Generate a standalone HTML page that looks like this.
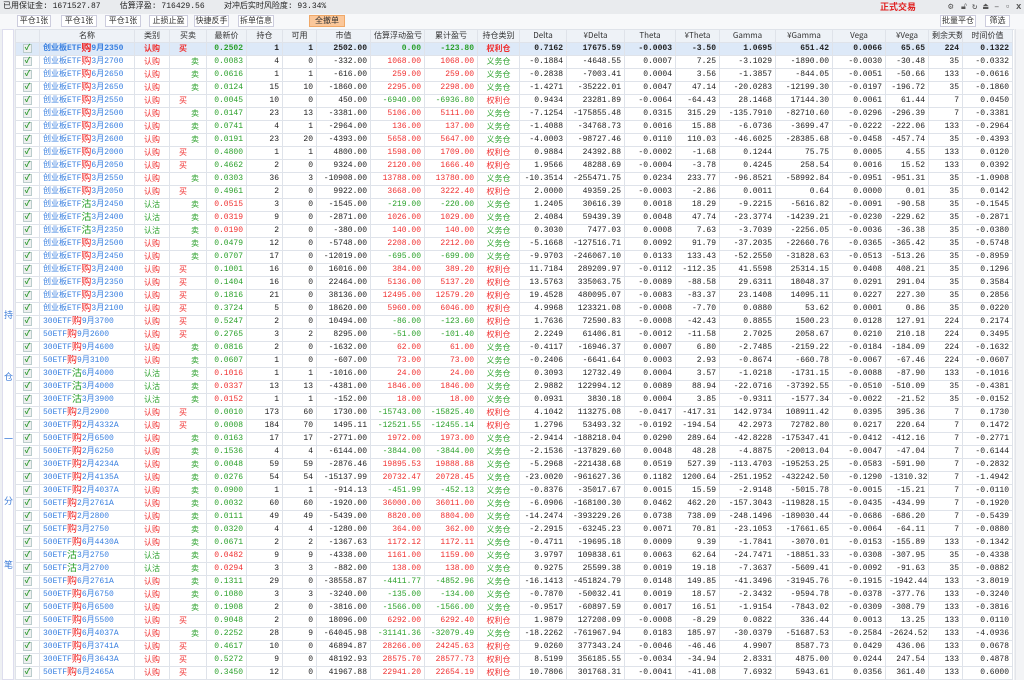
<!DOCTYPE html>
<html><head><meta charset="utf-8"><style>
*{margin:0;padding:0;box-sizing:border-box}
body{width:1024px;height:680px;overflow:hidden;background:#eef0f3;font-family:"Liberation Mono","Noto Sans CJK SC",monospace;font-size:8px;color:#222;position:relative}
.top{position:absolute;left:0;top:0;width:1024px;height:14px;background:#e9ebee;font-size:8px;line-height:13px;padding-left:3px;white-space:pre;font-family:"Liberation Mono","Noto Sans CJK SC",monospace}
.live{position:absolute;left:880px;top:0;color:#e02020;font:bold 9px/14px "Noto Sans CJK SC",sans-serif}
.ic{position:absolute;top:2px;font-size:9px;line-height:10px;color:#555}
.bar{position:absolute;left:0;top:14px;width:1024px;height:15px;background:#f7f8fa}
.btn{position:absolute;top:1px;height:12px;border:1px solid #ccd;background:#fff;font:8px/10px "Noto Sans CJK SC",sans-serif;text-align:center;color:#333}
.btn.o{background:#fbc79a;border-color:#f0a868}
.side{position:absolute;left:2px;top:29px;width:12px;height:651px;background:#fff;border:1px solid #dde}
.side span{position:absolute;left:1px;color:#3a7ad8;font:9px/10px "Noto Sans CJK SC",sans-serif}
.sb{position:absolute;left:1015px;top:29px;width:9px;height:651px;background:#f3f4f6;border-left:1px solid #e3e5ea}
table{position:absolute;left:15px;top:29px;width:999px;display:block;background:#fff;border-left:1px solid #dfe3ea;border-top:1px solid #dfe3ea}
tbody{display:block}
tr{display:flex;height:13px}
td,th{flex:none;display:block;border-right:1px solid #dfe3ea;border-bottom:1px solid #dfe3ea;height:13px;padding:0 3px;text-align:right;white-space:nowrap;overflow:hidden;line-height:12px;font-size:8px}
th{background:#eef2f7;font-weight:normal;text-align:center;font-family:"Noto Sans CJK SC",sans-serif;color:#333}
tr>*:nth-child(1){width:24px}tr>*:nth-child(2){width:95px}tr>*:nth-child(3){width:35px}tr>*:nth-child(4){width:37px}tr>*:nth-child(5){width:40px}tr>*:nth-child(6){width:36px}tr>*:nth-child(7){width:34px}tr>*:nth-child(8){width:54px}tr>*:nth-child(9){width:54px}tr>*:nth-child(10){width:53px}tr>*:nth-child(11){width:42px}tr>*:nth-child(12){width:47px}tr>*:nth-child(13){width:58px}tr>*:nth-child(14){width:51px}tr>*:nth-child(15){width:44px}tr>*:nth-child(16){width:56px}tr>*:nth-child(17){width:57px}tr>*:nth-child(18){width:53px}tr>*:nth-child(19){width:43px}tr>*:nth-child(20){width:34px}tr>*:nth-child(21){width:50px}
td:nth-child(2){display:flex;align-items:center;justify-content:flex-start;color:#3a80e0;font-family:"Liberation Mono","Noto Sans CJK SC",monospace}
td:nth-child(2) em{position:relative;top:-2px;font-style:normal;color:#f02020;font-size:10px;line-height:12px;font-family:"Noto Sans CJK SC",sans-serif}
td:nth-child(2) em.g{color:#2aa02a}
td:nth-child(3),td:nth-child(11){text-align:center;font-family:"Noto Sans CJK SC",sans-serif}
td:nth-child(4){font-family:"Noto Sans CJK SC",sans-serif}
td.b{text-align:left;padding-left:9px}
td.s{text-align:right;padding-right:7px}
.r{color:#f03030}.g{color:#2aa02a}
td:first-child{padding:1px 0 0 0;text-align:center;line-height:9px}
.cb{display:inline-block;width:9px;height:9px;border:1px solid #bcc;background:#eef0f0;color:#2a9a2a;font-size:8px;line-height:7px;font-weight:bold;font-style:normal;vertical-align:top}
tr.sel td{background:#dde9f8;font-weight:bold}
</style></head><body>
<div class="top">已用保证金: 1671527.87    估算浮盈: 716429.56    对冲后实时风险度: 93.34%</div>
<div class="live">正式交易</div>
<div class="ic" style="left:948px">⚙</div><div class="ic" style="left:961px">🔓︎</div><div class="ic" style="left:972px">↻</div><div class="ic" style="left:983px">⏏</div><div class="ic" style="left:994px">–</div><div class="ic" style="left:1005px">▫</div><div class="ic" style="left:1016px;font-weight:bold">x</div>
<div class="bar">
<div class="btn" style="left:17px;width:34px">平仓1张</div>
<div class="btn" style="left:61px;width:36px">平仓1张</div>
<div class="btn" style="left:105px;width:36px">平仓1张</div>
<div class="btn" style="left:149px;width:39px">止损止盈</div>
<div class="btn" style="left:194px;width:35px">快捷反手</div>
<div class="btn" style="left:238px;width:36px">拆单信息</div>
<div class="btn o" style="left:309px;width:36px">全撤单</div>
<div class="btn" style="left:940px;width:36px">批量平仓</div>
<div class="btn" style="left:985px;width:25px">筛选</div>
</div>
<div class="side"><span style="top:280px">持</span><span style="top:342px">仓</span><span style="top:404px">一</span><span style="top:466px">分</span><span style="top:530px">笔</span></div>
<table>
<tr><th></th><th>名称</th><th>类别</th><th>买卖</th><th>最新价</th><th>持仓</th><th>可用</th><th>市值</th><th>估算浮动盈亏</th><th>累计盈亏</th><th>持仓类别</th><th>Delta</th><th>¥Delta</th><th>Theta</th><th>¥Theta</th><th>Gamma</th><th>¥Gamma</th><th>Vega</th><th>¥Vega</th><th>剩余天数</th><th>时间价值</th></tr>
<tr class="sel"><td><i class="cb">✓</i></td><td>创业板ETF<em>购</em>9月2350</td><td class=r>认购</td><td class="r b">买</td><td class=g>0.2502</td><td>1</td><td>1</td><td>2502.00</td><td class=g>0.00</td><td class=g>-123.80</td><td class=r>权利仓</td><td>0.7162</td><td>17675.59</td><td>-0.0003</td><td>-3.50</td><td>1.0695</td><td>651.42</td><td>0.0066</td><td>65.65</td><td>224</td><td>0.1322</td></tr>
<tr><td><i class="cb">✓</i></td><td>创业板ETF<em>购</em>3月2700</td><td class=r>认购</td><td class="g s">卖</td><td class=g>0.0083</td><td>4</td><td>0</td><td>-332.00</td><td class=r>1068.00</td><td class=r>1068.00</td><td class=g>义务仓</td><td>-0.1884</td><td>-4648.55</td><td>0.0007</td><td>7.25</td><td>-3.1029</td><td>-1890.00</td><td>-0.0030</td><td>-30.48</td><td>35</td><td>-0.0332</td></tr>
<tr><td><i class="cb">✓</i></td><td>创业板ETF<em>购</em>6月2650</td><td class=r>认购</td><td class="g s">卖</td><td class=g>0.0616</td><td>1</td><td>1</td><td>-616.00</td><td class=r>259.00</td><td class=r>259.00</td><td class=g>义务仓</td><td>-0.2838</td><td>-7003.41</td><td>0.0004</td><td>3.56</td><td>-1.3857</td><td>-844.05</td><td>-0.0051</td><td>-50.66</td><td>133</td><td>-0.0616</td></tr>
<tr><td><i class="cb">✓</i></td><td>创业板ETF<em>购</em>3月2650</td><td class=r>认购</td><td class="g s">卖</td><td class=g>0.0124</td><td>15</td><td>10</td><td>-1860.00</td><td class=r>2295.00</td><td class=r>2298.00</td><td class=g>义务仓</td><td>-1.4271</td><td>-35222.01</td><td>0.0047</td><td>47.14</td><td>-20.0283</td><td>-12199.30</td><td>-0.0197</td><td>-196.72</td><td>35</td><td>-0.1860</td></tr>
<tr><td><i class="cb">✓</i></td><td>创业板ETF<em>购</em>3月2550</td><td class=r>认购</td><td class="r b">买</td><td class=g>0.0045</td><td>10</td><td>0</td><td>450.00</td><td class=g>-6940.00</td><td class=g>-6936.80</td><td class=r>权利仓</td><td>0.9434</td><td>23281.89</td><td>-0.0064</td><td>-64.43</td><td>28.1468</td><td>17144.30</td><td>0.0061</td><td>61.44</td><td>7</td><td>0.0450</td></tr>
<tr><td><i class="cb">✓</i></td><td>创业板ETF<em>购</em>3月2500</td><td class=r>认购</td><td class="g s">卖</td><td class=g>0.0147</td><td>23</td><td>13</td><td>-3381.00</td><td class=r>5106.00</td><td class=r>5111.00</td><td class=g>义务仓</td><td>-7.1254</td><td>-175855.48</td><td>0.0315</td><td>315.29</td><td>-135.7910</td><td>-82710.60</td><td>-0.0296</td><td>-296.39</td><td>7</td><td>-0.3381</td></tr>
<tr><td><i class="cb">✓</i></td><td>创业板ETF<em>购</em>3月2600</td><td class=r>认购</td><td class="g s">卖</td><td class=g>0.0741</td><td>4</td><td>1</td><td>-2964.00</td><td class=r>136.00</td><td class=r>137.00</td><td class=g>义务仓</td><td>-1.4088</td><td>-34768.73</td><td>0.0016</td><td>15.88</td><td>-6.0736</td><td>-3699.47</td><td>-0.0222</td><td>-222.06</td><td>133</td><td>-0.2964</td></tr>
<tr><td><i class="cb">✓</i></td><td>创业板ETF<em>购</em>3月2600</td><td class=r>认购</td><td class="g s">卖</td><td class=g>0.0191</td><td>23</td><td>20</td><td>-4393.00</td><td class=r>5658.00</td><td class=r>5647.00</td><td class=g>义务仓</td><td>-4.0003</td><td>-98727.46</td><td>0.0110</td><td>110.03</td><td>-46.6025</td><td>-28385.68</td><td>-0.0458</td><td>-457.74</td><td>35</td><td>-0.4393</td></tr>
<tr><td><i class="cb">✓</i></td><td>创业板ETF<em>购</em>6月2000</td><td class=r>认购</td><td class="r b">买</td><td class=g>0.4800</td><td>1</td><td>1</td><td>4800.00</td><td class=r>1598.00</td><td class=r>1709.00</td><td class=r>权利仓</td><td>0.9884</td><td>24392.88</td><td>-0.0002</td><td>-1.68</td><td>0.1244</td><td>75.75</td><td>0.0005</td><td>4.55</td><td>133</td><td>0.0120</td></tr>
<tr><td><i class="cb">✓</i></td><td>创业板ETF<em>购</em>6月2050</td><td class=r>认购</td><td class="r b">买</td><td class=g>0.4662</td><td>2</td><td>0</td><td>9324.00</td><td class=r>2120.00</td><td class=r>1666.40</td><td class=r>权利仓</td><td>1.9566</td><td>48288.69</td><td>-0.0004</td><td>-3.78</td><td>0.4245</td><td>258.54</td><td>0.0016</td><td>15.52</td><td>133</td><td>0.0392</td></tr>
<tr><td><i class="cb">✓</i></td><td>创业板ETF<em>购</em>3月2550</td><td class=r>认购</td><td class="g s">卖</td><td class=g>0.0303</td><td>36</td><td>3</td><td>-10908.00</td><td class=r>13788.00</td><td class=r>13780.00</td><td class=g>义务仓</td><td>-10.3514</td><td>-255471.75</td><td>0.0234</td><td>233.77</td><td>-96.8521</td><td>-58992.84</td><td>-0.0951</td><td>-951.31</td><td>35</td><td>-1.0908</td></tr>
<tr><td><i class="cb">✓</i></td><td>创业板ETF<em>购</em>3月2050</td><td class=r>认购</td><td class="r b">买</td><td class=g>0.4961</td><td>2</td><td>0</td><td>9922.00</td><td class=r>3668.00</td><td class=r>3222.40</td><td class=r>权利仓</td><td>2.0000</td><td>49359.25</td><td>-0.0003</td><td>-2.86</td><td>0.0011</td><td>0.64</td><td>0.0000</td><td>0.01</td><td>35</td><td>0.0142</td></tr>
<tr><td><i class="cb">✓</i></td><td>创业板ETF<em class=g>沽</em>3月2450</td><td class=g>认沽</td><td class="g s">卖</td><td class=r>0.0515</td><td>3</td><td>0</td><td>-1545.00</td><td class=g>-219.00</td><td class=g>-220.00</td><td class=g>义务仓</td><td>1.2405</td><td>30616.39</td><td>0.0018</td><td>18.29</td><td>-9.2215</td><td>-5616.82</td><td>-0.0091</td><td>-90.58</td><td>35</td><td>-0.1545</td></tr>
<tr><td><i class="cb">✓</i></td><td>创业板ETF<em class=g>沽</em>3月2400</td><td class=g>认沽</td><td class="g s">卖</td><td class=r>0.0319</td><td>9</td><td>0</td><td>-2871.00</td><td class=r>1026.00</td><td class=r>1029.00</td><td class=g>义务仓</td><td>2.4084</td><td>59439.39</td><td>0.0048</td><td>47.74</td><td>-23.3774</td><td>-14239.21</td><td>-0.0230</td><td>-229.62</td><td>35</td><td>-0.2871</td></tr>
<tr><td><i class="cb">✓</i></td><td>创业板ETF<em class=g>沽</em>3月2350</td><td class=g>认沽</td><td class="g s">卖</td><td class=r>0.0190</td><td>2</td><td>0</td><td>-380.00</td><td class=r>140.00</td><td class=r>140.00</td><td class=g>义务仓</td><td>0.3030</td><td>7477.03</td><td>0.0008</td><td>7.63</td><td>-3.7039</td><td>-2256.05</td><td>-0.0036</td><td>-36.38</td><td>35</td><td>-0.0380</td></tr>
<tr><td><i class="cb">✓</i></td><td>创业板ETF<em>购</em>3月2500</td><td class=r>认购</td><td class="g s">卖</td><td class=g>0.0479</td><td>12</td><td>0</td><td>-5748.00</td><td class=r>2208.00</td><td class=r>2212.00</td><td class=g>义务仓</td><td>-5.1668</td><td>-127516.71</td><td>0.0092</td><td>91.79</td><td>-37.2035</td><td>-22660.76</td><td>-0.0365</td><td>-365.42</td><td>35</td><td>-0.5748</td></tr>
<tr><td><i class="cb">✓</i></td><td>创业板ETF<em>购</em>3月2450</td><td class=r>认购</td><td class="g s">卖</td><td class=g>0.0707</td><td>17</td><td>0</td><td>-12019.00</td><td class=g>-695.00</td><td class=g>-699.00</td><td class=g>义务仓</td><td>-9.9703</td><td>-246067.10</td><td>0.0133</td><td>133.43</td><td>-52.2550</td><td>-31828.63</td><td>-0.0513</td><td>-513.26</td><td>35</td><td>-0.8959</td></tr>
<tr><td><i class="cb">✓</i></td><td>创业板ETF<em>购</em>3月2400</td><td class=r>认购</td><td class="r b">买</td><td class=g>0.1001</td><td>16</td><td>0</td><td>16016.00</td><td class=r>384.00</td><td class=r>389.20</td><td class=r>权利仓</td><td>11.7184</td><td>289209.97</td><td>-0.0112</td><td>-112.35</td><td>41.5598</td><td>25314.15</td><td>0.0408</td><td>408.21</td><td>35</td><td>0.1296</td></tr>
<tr><td><i class="cb">✓</i></td><td>创业板ETF<em>购</em>3月2350</td><td class=r>认购</td><td class="r b">买</td><td class=g>0.1404</td><td>16</td><td>0</td><td>22464.00</td><td class=r>5136.00</td><td class=r>5137.20</td><td class=r>权利仓</td><td>13.5763</td><td>335063.75</td><td>-0.0089</td><td>-88.58</td><td>29.6311</td><td>18048.37</td><td>0.0291</td><td>291.04</td><td>35</td><td>0.3584</td></tr>
<tr><td><i class="cb">✓</i></td><td>创业板ETF<em>购</em>3月2300</td><td class=r>认购</td><td class="r b">买</td><td class=g>0.1816</td><td>21</td><td>0</td><td>38136.00</td><td class=r>12495.00</td><td class=r>12579.20</td><td class=r>权利仓</td><td>19.4528</td><td>480095.07</td><td>-0.0083</td><td>-83.37</td><td>23.1408</td><td>14095.11</td><td>0.0227</td><td>227.30</td><td>35</td><td>0.2856</td></tr>
<tr><td><i class="cb">✓</i></td><td>创业板ETF<em>购</em>3月2100</td><td class=r>认购</td><td class="r b">买</td><td class=g>0.3724</td><td>5</td><td>0</td><td>18620.00</td><td class=r>5960.00</td><td class=r>6046.00</td><td class=r>权利仓</td><td>4.9968</td><td>123321.08</td><td>-0.0008</td><td>-7.70</td><td>0.0880</td><td>53.62</td><td>0.0001</td><td>0.86</td><td>35</td><td>0.0220</td></tr>
<tr><td><i class="cb">✓</i></td><td>300ETF<em>购</em>9月3700</td><td class=r>认购</td><td class="r b">买</td><td class=g>0.5247</td><td>2</td><td>0</td><td>10494.00</td><td class=g>-86.00</td><td class=g>-123.60</td><td class=r>权利仓</td><td>1.7636</td><td>72590.83</td><td>-0.0008</td><td>-42.43</td><td>0.8855</td><td>1500.23</td><td>0.0128</td><td>127.91</td><td>224</td><td>0.2174</td></tr>
<tr><td><i class="cb">✓</i></td><td>50ETF<em>购</em>9月2600</td><td class=r>认购</td><td class="r b">买</td><td class=g>0.2765</td><td>3</td><td>2</td><td>8295.00</td><td class=g>-51.00</td><td class=g>-101.40</td><td class=r>权利仓</td><td>2.2249</td><td>61406.81</td><td>-0.0012</td><td>-11.58</td><td>2.7025</td><td>2058.67</td><td>0.0210</td><td>210.18</td><td>224</td><td>0.3495</td></tr>
<tr><td><i class="cb">✓</i></td><td>300ETF<em>购</em>9月4600</td><td class=r>认购</td><td class="g s">卖</td><td class=g>0.0816</td><td>2</td><td>0</td><td>-1632.00</td><td class=r>62.00</td><td class=r>61.00</td><td class=g>义务仓</td><td>-0.4117</td><td>-16946.37</td><td>0.0007</td><td>6.80</td><td>-2.7485</td><td>-2159.22</td><td>-0.0184</td><td>-184.09</td><td>224</td><td>-0.1632</td></tr>
<tr><td><i class="cb">✓</i></td><td>50ETF<em>购</em>9月3100</td><td class=r>认购</td><td class="g s">卖</td><td class=g>0.0607</td><td>1</td><td>0</td><td>-607.00</td><td class=r>73.00</td><td class=r>73.00</td><td class=g>义务仓</td><td>-0.2406</td><td>-6641.64</td><td>0.0003</td><td>2.93</td><td>-0.8674</td><td>-660.78</td><td>-0.0067</td><td>-67.46</td><td>224</td><td>-0.0607</td></tr>
<tr><td><i class="cb">✓</i></td><td>300ETF<em class=g>沽</em>6月4000</td><td class=g>认沽</td><td class="g s">卖</td><td class=r>0.1016</td><td>1</td><td>1</td><td>-1016.00</td><td class=r>24.00</td><td class=r>24.00</td><td class=g>义务仓</td><td>0.3093</td><td>12732.49</td><td>0.0004</td><td>3.57</td><td>-1.0218</td><td>-1731.15</td><td>-0.0088</td><td>-87.90</td><td>133</td><td>-0.1016</td></tr>
<tr><td><i class="cb">✓</i></td><td>300ETF<em class=g>沽</em>3月4000</td><td class=g>认沽</td><td class="g s">卖</td><td class=r>0.0337</td><td>13</td><td>13</td><td>-4381.00</td><td class=r>1846.00</td><td class=r>1846.00</td><td class=g>义务仓</td><td>2.9882</td><td>122994.12</td><td>0.0089</td><td>88.94</td><td>-22.0716</td><td>-37392.55</td><td>-0.0510</td><td>-510.09</td><td>35</td><td>-0.4381</td></tr>
<tr><td><i class="cb">✓</i></td><td>300ETF<em class=g>沽</em>3月3900</td><td class=g>认沽</td><td class="g s">卖</td><td class=r>0.0152</td><td>1</td><td>1</td><td>-152.00</td><td class=r>18.00</td><td class=r>18.00</td><td class=g>义务仓</td><td>0.0931</td><td>3830.18</td><td>0.0004</td><td>3.85</td><td>-0.9311</td><td>-1577.34</td><td>-0.0022</td><td>-21.52</td><td>35</td><td>-0.0152</td></tr>
<tr><td><i class="cb">✓</i></td><td>50ETF<em>购</em>2月2900</td><td class=r>认购</td><td class="r b">买</td><td class=g>0.0010</td><td>173</td><td>60</td><td>1730.00</td><td class=g>-15743.00</td><td class=g>-15825.40</td><td class=r>权利仓</td><td>4.1042</td><td>113275.08</td><td>-0.0417</td><td>-417.31</td><td>142.9734</td><td>108911.42</td><td>0.0395</td><td>395.36</td><td>7</td><td>0.1730</td></tr>
<tr><td><i class="cb">✓</i></td><td>300ETF<em>购</em>2月4332A</td><td class=r>认购</td><td class="r b">买</td><td class=g>0.0008</td><td>184</td><td>70</td><td>1495.11</td><td class=g>-12521.55</td><td class=g>-12455.14</td><td class=r>权利仓</td><td>1.2796</td><td>53493.32</td><td>-0.0192</td><td>-194.54</td><td>42.2973</td><td>72782.80</td><td>0.0217</td><td>220.64</td><td>7</td><td>0.1472</td></tr>
<tr><td><i class="cb">✓</i></td><td>500ETF<em>购</em>2月6500</td><td class=r>认购</td><td class="g s">卖</td><td class=g>0.0163</td><td>17</td><td>17</td><td>-2771.00</td><td class=r>1972.00</td><td class=r>1973.00</td><td class=g>义务仓</td><td>-2.9414</td><td>-188218.04</td><td>0.0290</td><td>289.64</td><td>-42.8228</td><td>-175347.41</td><td>-0.0412</td><td>-412.16</td><td>7</td><td>-0.2771</td></tr>
<tr><td><i class="cb">✓</i></td><td>500ETF<em>购</em>2月6250</td><td class=r>认购</td><td class="g s">卖</td><td class=g>0.1536</td><td>4</td><td>4</td><td>-6144.00</td><td class=g>-3844.00</td><td class=g>-3844.00</td><td class=g>义务仓</td><td>-2.1536</td><td>-137829.60</td><td>0.0048</td><td>48.28</td><td>-4.8875</td><td>-20013.04</td><td>-0.0047</td><td>-47.04</td><td>7</td><td>-0.6144</td></tr>
<tr><td><i class="cb">✓</i></td><td>300ETF<em>购</em>2月4234A</td><td class=r>认购</td><td class="g s">卖</td><td class=g>0.0048</td><td>59</td><td>59</td><td>-2876.46</td><td class=r>19895.53</td><td class=r>19888.88</td><td class=g>义务仓</td><td>-5.2968</td><td>-221438.68</td><td>0.0519</td><td>527.39</td><td>-113.4703</td><td>-195253.25</td><td>-0.0583</td><td>-591.90</td><td>7</td><td>-0.2832</td></tr>
<tr><td><i class="cb">✓</i></td><td>300ETF<em>购</em>2月4135A</td><td class=r>认购</td><td class="g s">卖</td><td class=g>0.0276</td><td>54</td><td>54</td><td>-15137.99</td><td class=r>20732.47</td><td class=r>20728.45</td><td class=g>义务仓</td><td>-23.0020</td><td>-961627.36</td><td>0.1182</td><td>1200.64</td><td>-251.1952</td><td>-432242.50</td><td>-0.1290</td><td>-1310.32</td><td>7</td><td>-1.4942</td></tr>
<tr><td><i class="cb">✓</i></td><td>300ETF<em>购</em>2月4037A</td><td class=r>认购</td><td class="g s">卖</td><td class=g>0.0900</td><td>1</td><td>1</td><td>-914.13</td><td class=g>-451.99</td><td class=g>-452.13</td><td class=g>义务仓</td><td>-0.8376</td><td>-35017.67</td><td>0.0015</td><td>15.59</td><td>-2.9148</td><td>-5015.78</td><td>-0.0015</td><td>-15.21</td><td>7</td><td>-0.0110</td></tr>
<tr><td><i class="cb">✓</i></td><td>50ETF<em>购</em>2月2761A</td><td class=r>认购</td><td class="g s">卖</td><td class=g>0.0032</td><td>60</td><td>60</td><td>-1920.00</td><td class=r>36000.00</td><td class=r>36011.00</td><td class=g>义务仓</td><td>-6.0906</td><td>-168100.30</td><td>0.0462</td><td>462.20</td><td>-157.3043</td><td>-119828.15</td><td>-0.0435</td><td>-434.99</td><td>7</td><td>-0.1920</td></tr>
<tr><td><i class="cb">✓</i></td><td>50ETF<em>购</em>2月2800</td><td class=r>认购</td><td class="g s">卖</td><td class=g>0.0111</td><td>49</td><td>49</td><td>-5439.00</td><td class=r>8820.00</td><td class=r>8804.00</td><td class=g>义务仓</td><td>-14.2474</td><td>-393229.26</td><td>0.0738</td><td>738.09</td><td>-248.1496</td><td>-189030.44</td><td>-0.0686</td><td>-686.20</td><td>7</td><td>-0.5439</td></tr>
<tr><td><i class="cb">✓</i></td><td>50ETF<em>购</em>3月2750</td><td class=r>认购</td><td class="g s">卖</td><td class=g>0.0320</td><td>4</td><td>4</td><td>-1280.00</td><td class=r>364.00</td><td class=r>362.00</td><td class=g>义务仓</td><td>-2.2915</td><td>-63245.23</td><td>0.0071</td><td>70.81</td><td>-23.1053</td><td>-17661.65</td><td>-0.0064</td><td>-64.11</td><td>7</td><td>-0.0880</td></tr>
<tr><td><i class="cb">✓</i></td><td>500ETF<em>购</em>6月4430A</td><td class=r>认购</td><td class="g s">卖</td><td class=g>0.0671</td><td>2</td><td>2</td><td>-1367.63</td><td class=r>1172.12</td><td class=r>1172.11</td><td class=g>义务仓</td><td>-0.4711</td><td>-19695.18</td><td>0.0009</td><td>9.39</td><td>-1.7841</td><td>-3070.01</td><td>-0.0153</td><td>-155.89</td><td>133</td><td>-0.1342</td></tr>
<tr><td><i class="cb">✓</i></td><td>50ETF<em class=g>沽</em>3月2750</td><td class=g>认沽</td><td class="g s">卖</td><td class=r>0.0482</td><td>9</td><td>9</td><td>-4338.00</td><td class=r>1161.00</td><td class=r>1159.00</td><td class=g>义务仓</td><td>3.9797</td><td>109838.61</td><td>0.0063</td><td>62.64</td><td>-24.7471</td><td>-18851.33</td><td>-0.0308</td><td>-307.95</td><td>35</td><td>-0.4338</td></tr>
<tr><td><i class="cb">✓</i></td><td>50ETF<em class=g>沽</em>3月2700</td><td class=g>认沽</td><td class="g s">卖</td><td class=r>0.0294</td><td>3</td><td>3</td><td>-882.00</td><td class=r>138.00</td><td class=r>138.00</td><td class=g>义务仓</td><td>0.9275</td><td>25599.38</td><td>0.0019</td><td>19.18</td><td>-7.3637</td><td>-5609.41</td><td>-0.0092</td><td>-91.63</td><td>35</td><td>-0.0882</td></tr>
<tr><td><i class="cb">✓</i></td><td>50ETF<em>购</em>6月2761A</td><td class=r>认购</td><td class="g s">卖</td><td class=g>0.1311</td><td>29</td><td>0</td><td>-38558.87</td><td class=g>-4411.77</td><td class=g>-4852.96</td><td class=g>义务仓</td><td>-16.1413</td><td>-451824.79</td><td>0.0148</td><td>149.85</td><td>-41.3496</td><td>-31945.76</td><td>-0.1915</td><td>-1942.44</td><td>133</td><td>-3.8019</td></tr>
<tr><td><i class="cb">✓</i></td><td>500ETF<em>购</em>6月6750</td><td class=r>认购</td><td class="g s">卖</td><td class=g>0.1080</td><td>3</td><td>3</td><td>-3240.00</td><td class=g>-135.00</td><td class=g>-134.00</td><td class=g>义务仓</td><td>-0.7870</td><td>-50032.41</td><td>0.0019</td><td>18.57</td><td>-2.3432</td><td>-9594.78</td><td>-0.0378</td><td>-377.76</td><td>133</td><td>-0.3240</td></tr>
<tr><td><i class="cb">✓</i></td><td>500ETF<em>购</em>6月6500</td><td class=r>认购</td><td class="g s">卖</td><td class=g>0.1908</td><td>2</td><td>0</td><td>-3816.00</td><td class=g>-1566.00</td><td class=g>-1566.00</td><td class=g>义务仓</td><td>-0.9517</td><td>-60897.59</td><td>0.0017</td><td>16.51</td><td>-1.9154</td><td>-7843.02</td><td>-0.0309</td><td>-308.79</td><td>133</td><td>-0.3816</td></tr>
<tr><td><i class="cb">✓</i></td><td>500ETF<em>购</em>6月5500</td><td class=r>认购</td><td class="r b">买</td><td class=g>0.9048</td><td>2</td><td>0</td><td>18096.00</td><td class=r>6292.00</td><td class=r>6292.40</td><td class=r>权利仓</td><td>1.9879</td><td>127208.09</td><td>-0.0008</td><td>-8.29</td><td>0.0822</td><td>336.44</td><td>0.0013</td><td>13.25</td><td>133</td><td>0.0110</td></tr>
<tr><td><i class="cb">✓</i></td><td>300ETF<em>购</em>6月4037A</td><td class=r>认购</td><td class="g s">卖</td><td class=g>0.2252</td><td>28</td><td>9</td><td>-64045.98</td><td class=g>-31141.36</td><td class=g>-32079.49</td><td class=g>义务仓</td><td>-18.2262</td><td>-761967.94</td><td>0.0183</td><td>185.97</td><td>-30.0379</td><td>-51687.53</td><td>-0.2584</td><td>-2624.52</td><td>133</td><td>-4.0936</td></tr>
<tr><td><i class="cb">✓</i></td><td>300ETF<em>购</em>6月3741A</td><td class=r>认购</td><td class="r b">买</td><td class=g>0.4617</td><td>10</td><td>0</td><td>46894.87</td><td class=r>28266.00</td><td class=r>24245.63</td><td class=r>权利仓</td><td>9.0260</td><td>377343.24</td><td>-0.0046</td><td>-46.46</td><td>4.9907</td><td>8587.73</td><td>0.0429</td><td>436.06</td><td>133</td><td>0.0678</td></tr>
<tr><td><i class="cb">✓</i></td><td>300ETF<em>购</em>6月3643A</td><td class=r>认购</td><td class="r b">买</td><td class=g>0.5272</td><td>9</td><td>0</td><td>48192.93</td><td class=r>28575.70</td><td class=r>28577.73</td><td class=r>权利仓</td><td>8.5199</td><td>356185.55</td><td>-0.0034</td><td>-34.94</td><td>2.8331</td><td>4875.00</td><td>0.0244</td><td>247.54</td><td>133</td><td>0.4878</td></tr>
<tr><td><i class="cb">✓</i></td><td>50ETF<em>购</em>6月2465A</td><td class=r>认购</td><td class="r b">买</td><td class=g>0.3450</td><td>12</td><td>0</td><td>41967.88</td><td class=r>22941.20</td><td class=r>22654.19</td><td class=r>权利仓</td><td>10.7806</td><td>301768.31</td><td>-0.0041</td><td>-41.08</td><td>7.6932</td><td>5943.61</td><td>0.0356</td><td>361.40</td><td>133</td><td>0.6000</td></tr>
</table>
<div class="sb"></div>
</body></html>
